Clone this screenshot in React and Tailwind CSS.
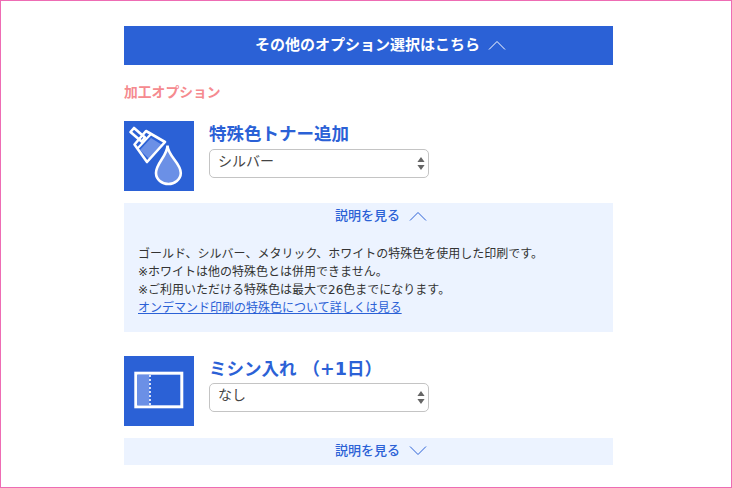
import React from "react";

function Chevron({ up, className }) {
  return (
    <svg width="18" height="10" viewBox="0 0 18 10" fill="none" className={className}>
      <path d={up ? "M1 9.5L9 1.5L17 9.5" : "M1 .5L9 8.5L17 .5"} stroke="currentColor" strokeWidth="1" />
    </svg>
  );
}

function BrushIcon() {
  return (
    <svg width="70" height="70" viewBox="0 0 70 70" fill="none" className="shrink-0 bg-[#2b61d6]">
      <path d="M6.5 11L10 7L21 16.5L17.5 20.5Z" stroke="#fff" strokeWidth="2.6" strokeLinejoin="round" />
      <path d="M16 29L27 17L39 24.5L25 38Z" fill="#6b90e6" />
      <path d="M10.5 23.5L22 10L41 21L23 41Z" stroke="#fff" strokeWidth="2.6" strokeLinejoin="round" />
      <path d="M13.5 27.5L26.5 13.5" stroke="#fff" strokeWidth="2.2" />
      <path
        d="M43.5 24.5C43.7 35 57 42 56.8 52C56.7 58.5 50.5 63 44.5 63C38 63 32 58.5 32 52C32 42 43.3 35 43.5 24.5Z"
        fill="#6b90e6"
        stroke="#fff"
        strokeWidth="2.6"
      />
    </svg>
  );
}

function PerforationIcon() {
  return (
    <svg width="70" height="70" viewBox="0 0 70 70" fill="none" className="shrink-0 bg-[#2b61d6]">
      <rect x="11.8" y="17.2" width="46" height="33.6" fill="#2b61d6" stroke="#fff" strokeWidth="3" />
      <rect x="13.3" y="18.7" width="12.2" height="30.6" fill="#6b90e6" />
      <path d="M26 19V50" stroke="#fff" strokeWidth="1.6" strokeDasharray="2 2" />
    </svg>
  );
}

function SelectBox({ value }) {
  return (
    <div className="flex h-[29px] w-[220px] items-center justify-between rounded-[5px] border border-[#c4c4c4] bg-white pl-2 pr-[3px] text-[14px] text-[#444]">
      <span className="-mt-[4px]">{value}</span>
      <svg width="8" height="13" viewBox="0 0 8 13">
        <path d="M4 0L7.6 5H.4Z M.4 8H7.6L4 13Z" fill="#666" />
      </svg>
    </div>
  );
}

function Option({ icon, title, value, titleClass }) {
  return (
    <div className="flex gap-[15px]">
      {icon}
      <div className="flex flex-col">
        <div className={`text-[17.5px] font-bold leading-[26px] text-[#2b61d6] ${titleClass}`}>{title}</div>
        <SelectBox value={value} />
      </div>
    </div>
  );
}

function DescHeader({ up }) {
  return (
    <div className="flex h-[27px] items-center justify-center gap-[9px] pl-[25px] text-[13px] font-medium text-[#2b61d6]">
      <span className="-mt-[2px]">説明を見る</span>
      <Chevron up={up} className="-mt-[1px]" />
    </div>
  );
}

export default function App() {
  return (
    <div
      className="h-[488px] w-[732px] overflow-hidden border border-[#ee6cb4] bg-white"
      style={{ fontFamily: '"DejaVu Sans", "Noto Sans CJK JP", sans-serif' }}
    >
      <div className="ml-[123px] mt-[25px] w-[489px]">
        <div className="flex h-[39px] items-center justify-center gap-[8px] bg-[#2b61d6] pl-[24px] text-[15px] font-bold text-white">
          <span>その他のオプション選択はこちら</span>
          <Chevron up className="-mt-[2px]" />
        </div>
        <div className="mt-[17px] h-[21px] text-[13.8px] font-bold leading-[21px] text-[#f58a8f]">加工オプション</div>
        <div className="mt-[18px]">
          <Option icon={<BrushIcon />} title="特殊色トナー追加" value="シルバー" titleClass="h-[28px]" />
        </div>
        <div className="mt-[12px] h-[129px] bg-[#ecf3ff]">
          <DescHeader up />
          <div className="mt-[15px] pl-[14px] text-[12px] leading-[18px] text-[#333]">
            <p>ゴールド、シルバー、メタリック、ホワイトの特殊色を使用した印刷です。</p>
            <p>※ホワイトは他の特殊色とは併用できません。</p>
            <p>※ご利用いただける特殊色は最大で26色までになります。</p>
            <a href="#" className="text-[#2b61d6] underline">オンデマンド印刷の特殊色について詳しくは見る</a>
          </div>
        </div>
        <div className="mt-[24px]">
          <Option icon={<PerforationIcon />} title="ミシン入れ （+1日）" value="なし" titleClass="h-[27px]" />
        </div>
        <div className="mt-[12px] bg-[#ecf3ff]">
          <DescHeader />
        </div>
      </div>
    </div>
  );
}
